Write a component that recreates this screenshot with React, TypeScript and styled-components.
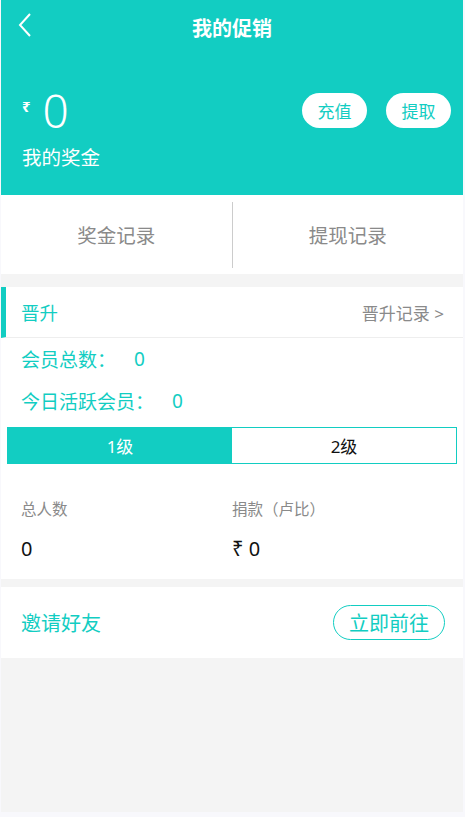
import styled, { createGlobalStyle } from "styled-components"

const TEAL = "#12cdc2"

const Global = createGlobalStyle`
  html, body {
    margin: 0;
    padding: 0;
    background: #f8f8fc;
  }
  body {
    font-family: "Noto Sans", "Noto Sans CJK SC", sans-serif;
  }
`

const Page = styled.div`
  width: 462px;
  height: 812px;
  margin-left: 1px;
  background: #f4f4f4;
  display: flex;
  flex-direction: column;
`

const Hero = styled.div`
  background: ${TEAL};
  height: 195px;
  color: white;
  display: flex;
  flex-direction: column;
`

const TopBar = styled.div`
  height: 56px;
  display: flex;
  align-items: center;
  justify-content: center;
  position: relative;
`

const Back = styled.div`
  position: absolute;
  left: 15px;
  top: 12px;
  width: 20px;
  height: 26px;
  display: flex;
`

const Title = styled.h1`
  margin: 0 0 2px 0;
  font-size: 20px;
  font-weight: 700;
`

const BalanceRow = styled.div`
  display: flex;
  align-items: center;
  justify-content: space-between;
  padding: 0 12px 0 21px;
  margin-top: 34px;
`

const Amount = styled.div`
  display: flex;
  align-items: flex-start;
  gap: 12px;
`

const Rupee = styled.span`
  font-size: 15px;
  line-height: 1;
  margin-top: 9px;
  font-weight: 700;
`

const Big = styled.span`
  font-size: 46px;
  line-height: 40px;
  font-weight: 300;
`

const Actions = styled.div`
  display: flex;
  gap: 19px;
`

const PillButton = styled.button`
  width: 65px;
  height: 35px;
  border: none;
  border-radius: 18px;
  background: white;
  color: ${TEAL};
  font-family: inherit;
  font-size: 17px;
  padding: 0;
`

const Caption = styled.div`
  font-size: 19.5px;
  padding-left: 21px;
  margin-top: 12px;
`

const RecordTabs = styled.div`
  background: white;
  height: 79px;
  display: flex;
  align-items: center;
`

const RecordTab = styled.div<{ divider?: boolean }>`
  flex: 1;
  height: 66px;
  display: flex;
  align-items: center;
  justify-content: center;
  font-size: 19.5px;
  color: #8a8a8a;
  border-left: ${p => (p.divider ? "1px solid #ccc" : "none")};
`

const Card = styled.div<{ gap: number }>`
  background: white;
  margin-top: ${p => p.gap}px;
`

const CardHeader = styled.div`
  height: 50px;
  display: flex;
  align-items: center;
  justify-content: space-between;
  padding: 0 19px 0 15px;
  border-left: 5px solid ${TEAL};
  border-bottom: 1px solid #eee;
`

const CardTitle = styled.span`
  font-size: 18.5px;
  color: ${TEAL};
`

const LinkText = styled.span`
  font-size: 17px;
  color: #8a8a8a;
`

const StatLine = styled.div`
  font-size: 19px;
  color: ${TEAL};
  padding-left: 20px;
  height: 42px;
  display: flex;
  align-items: center;
`

const Value = styled.span`
  margin-left: 18px;
`

const Levels = styled.div`
  display: flex;
  margin: 5px 6px 0 6px;
  height: 35px;
  border: 1px solid ${TEAL};
`

const Level = styled.div<{ active?: boolean }>`
  flex: 1;
  display: flex;
  align-items: center;
  justify-content: center;
  font-size: 17px;
  background: ${p => (p.active ? TEAL : "white")};
  color: ${p => (p.active ? "white" : "#111")};
`

const Grid = styled.div`
  display: grid;
  grid-template-columns: 211px 1fr;
  padding: 33px 0 17px 20px;
  row-gap: 15px;
`

const Label = styled.div`
  font-size: 15.5px;
  color: #8a8a8a;
`

const Num = styled.div`
  font-size: 20px;
  color: #111;
`

const InviteRow = styled.div`
  height: 71px;
  display: flex;
  align-items: center;
  justify-content: space-between;
  padding: 0 18px 0 20px;
`

const InviteText = styled.span`
  font-size: 20px;
  color: ${TEAL};
`

const OutlineButton = styled.button`
  height: 35px;
  width: 112px;
  border: 1px solid ${TEAL};
  border-radius: 18px;
  background: white;
  color: ${TEAL};
  font-family: inherit;
  font-size: 20px;
  padding: 0;
`

export default function App() {
  return (
    <>
      <Global />
      <Page>
        <Hero>
          <TopBar>
            <Back>
              <svg width="20" height="26" viewBox="0 0 20 26">
                <path d="M14 2 L4 13 L14 24" fill="none" stroke="white" strokeWidth="2" />
              </svg>
            </Back>
            <Title>我的促销</Title>
          </TopBar>
          <BalanceRow>
            <Amount>
              <Rupee>₹</Rupee>
              <Big>0</Big>
            </Amount>
            <Actions>
              <PillButton>充值</PillButton>
              <PillButton>提取</PillButton>
            </Actions>
          </BalanceRow>
          <Caption>我的奖金</Caption>
        </Hero>
        <RecordTabs>
          <RecordTab>奖金记录</RecordTab>
          <RecordTab divider>提现记录</RecordTab>
        </RecordTabs>
        <Card gap={13}>
          <CardHeader>
            <CardTitle>晋升</CardTitle>
            <LinkText>晋升记录 &gt;</LinkText>
          </CardHeader>
          <StatLine>
            会员总数：<Value>0</Value>
          </StatLine>
          <StatLine>
            今日活跃会员：<Value>0</Value>
          </StatLine>
          <Levels>
            <Level active>1级</Level>
            <Level>2级</Level>
          </Levels>
          <Grid>
            <Label>总人数</Label>
            <Label>捐款（卢比）</Label>
            <Num>0</Num>
            <Num>₹ 0</Num>
          </Grid>
        </Card>
        <Card gap={8}>
          <InviteRow>
            <InviteText>邀请好友</InviteText>
            <OutlineButton>立即前往</OutlineButton>
          </InviteRow>
        </Card>
      </Page>
    </>
  )
}
